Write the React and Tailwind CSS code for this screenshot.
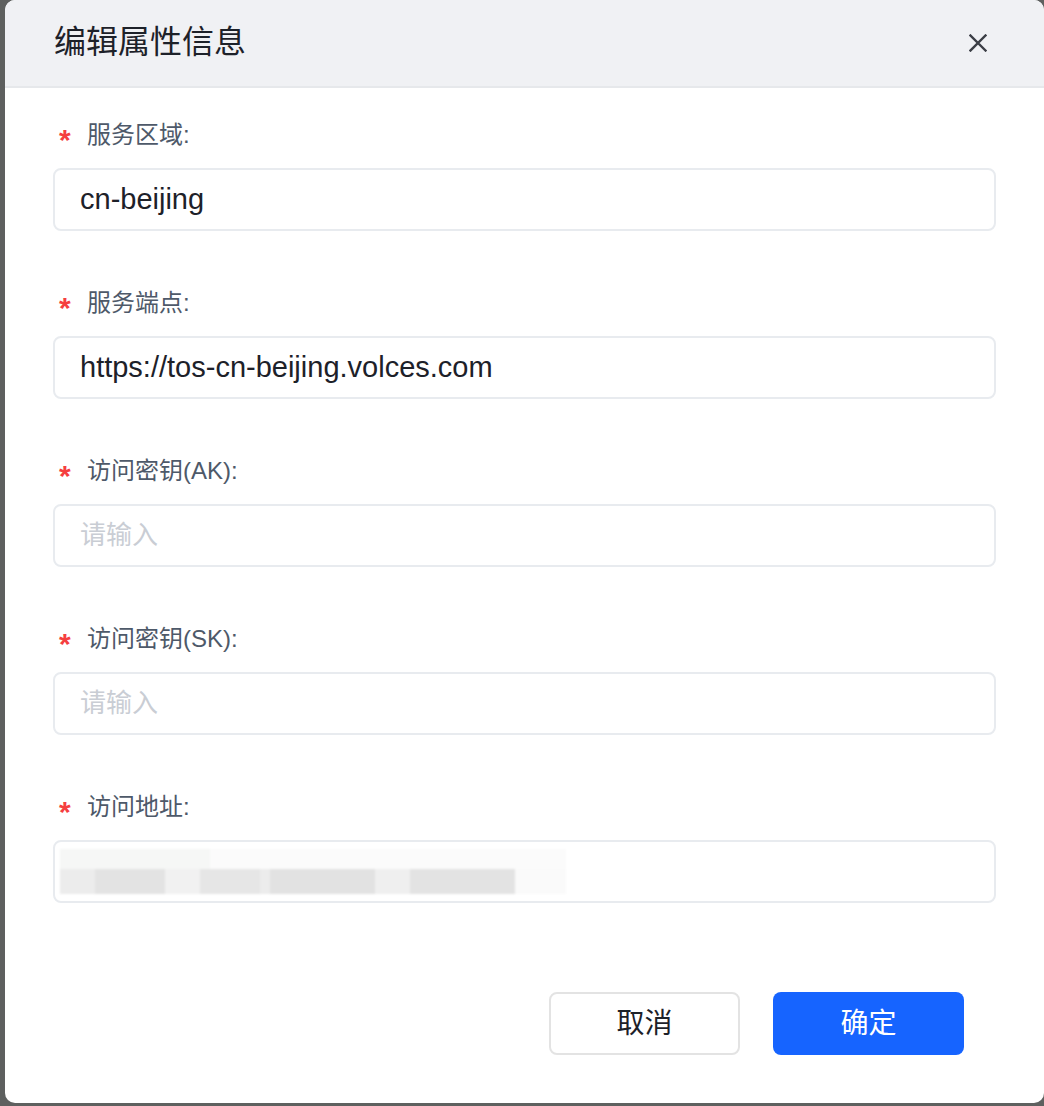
import React from "react";

const FONT = {
  fontFamily:
    '"Liberation Sans", "Noto Sans CJK SC", "Noto Sans", sans-serif',
};

const fields = [
  { label: "服务区域:", value: "cn-beijing" },
  { label: "服务端点:", value: "https://tos-cn-beijing.volces.com" },
  { label: "访问密钥(AK):", placeholder: "请输入" },
  { label: "访问密钥(SK):", placeholder: "请输入" },
  { label: "访问地址:", masked: true },
];

// blurred-out address, drawn as grey blocks
const MaskedValue = () => (
  <div className="flex flex-col blur-[1px]">
    <div className="flex h-[20px] w-[506px]">
      <div className="w-[150px] bg-[#f6f7f6]" />
      <div className="flex-1 bg-[#fbfbfb]" />
    </div>
    <div className="flex h-[25px] w-[506px]">
      <div className="w-[35px] bg-[#ececec]" />
      <div className="w-[70px] bg-[#e3e3e3]" />
      <div className="w-[35px] bg-[#f1f1f1]" />
      <div className="w-[60px] bg-[#e6e6e6]" />
      <div className="w-[10px] bg-[#ececec]" />
      <div className="w-[105px] bg-[#e2e2e2]" />
      <div className="w-[35px] bg-[#efefef]" />
      <div className="w-[105px] bg-[#e3e3e3]" />
      <div className="flex-1 bg-[#fafafa]" />
    </div>
  </div>
);

const Field = ({ label, value, placeholder, masked, last }) => (
  <div className={last ? "" : "mb-[55px]"}>
    <div className="flex h-[34px] items-center">
      <span className="w-[34px] pl-[6px] pt-[9px] text-[30px] font-bold leading-none text-[#f53f3f]">
        *
      </span>
      <span className="text-[24px] text-[#4e5969]">{label}</span>
    </div>
    <div
      className={
        "mt-[16px] flex h-[63px] items-center rounded-[8px] border-2 border-[#e8ebef] bg-white " +
        (masked ? "pl-[5px]" : "pl-[25px]")
      }
    >
      {masked ? (
        <MaskedValue />
      ) : value ? (
        <span className="text-[29px] text-[#1d2129]">{value}</span>
      ) : (
        <span className="text-[26px] text-[#c9cdd4]">{placeholder}</span>
      )}
    </div>
  </div>
);

export default function App() {
  return (
    <div
      className="h-[1106px] w-[1044px] overflow-hidden bg-[#5e605f] pl-[5px]"
      style={FONT}
    >
      <div className="flex h-[1103px] w-[1039px] flex-col overflow-hidden rounded-[10px] bg-white">
        <div className="flex h-[88px] shrink-0 items-center justify-between border-b-2 border-[#e6e8eb] bg-[#f0f1f4] pl-[49px] pr-[57px]">
          <h1 className="pb-[2px] text-[32px] text-[#1d2129]">编辑属性信息</h1>
          <svg width="18" height="18" viewBox="0 0 18 18" className="mb-[1px]">
            <path
              d="M1.5 1.5 L16.5 16.5 M16.5 1.5 L1.5 16.5"
              stroke="#3b3e45"
              strokeWidth="2.4"
              strokeLinecap="square"
            />
          </svg>
        </div>

        <div className="px-[48px] pt-[30px]">
          {fields.map((f, i) => (
            <Field key={i} {...f} last={i === fields.length - 1} />
          ))}
        </div>

        <div className="mt-[89px] flex justify-end gap-[33px] pr-[80px]">
          <button className="flex h-[63px] w-[191px] items-center justify-center rounded-[8px] border-2 border-[#e3e3e3] bg-white text-[28px] text-[#1d2129]">
            取消
          </button>
          <button className="flex h-[63px] w-[191px] items-center justify-center rounded-[8px] bg-[#1664ff] text-[28px] text-white">
            确定
          </button>
        </div>
      </div>
    </div>
  );
}
